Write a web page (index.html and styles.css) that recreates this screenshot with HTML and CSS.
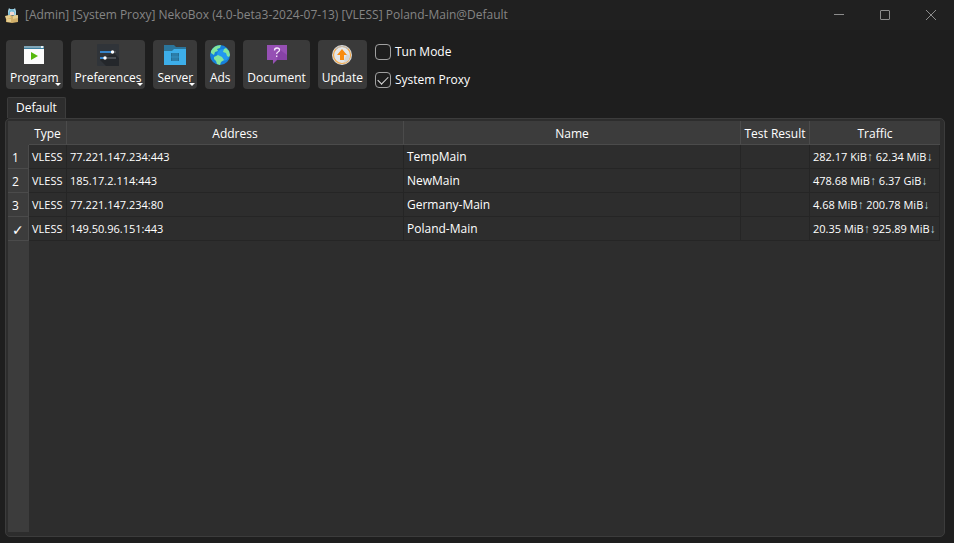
FILE: index.html
```html
<!DOCTYPE html>
<html lang="en">
<head>
<meta charset="utf-8">
<title>NekoBox</title>
<link rel="stylesheet" href="styles.css">
</head>
<body>
<header class="titlebar">
  <svg class="app-icon" viewBox="0 0 14 16" aria-hidden="true">
    <path fill="#a9d6e8" d="M3 10V4l1-3 1 1h4l1-1 1 3v6z"/>
    <path fill="#79b9d2" d="M4 4l2-2h2l2 3v3L9 5 6 4 5 8H3z"/>
    <path fill="#f2d9d2" d="M5 5h4v3H5z"/>
    <path fill="#55778d" d="M6 8h3v1H6z"/>
    <path fill="#d2b06a" d="M1 9l5-1 1 1 5-1 1 2v5l-6 1-6-1z"/>
    <path fill="#e6cd8f" d="M0 9l5-1 1 3-5 1zM8 9l5-1v3l-5 1zM2 12h4v3H2z"/>
  </svg>
  <h1 class="title">[Admin] [System Proxy] NekoBox (4.0-beta3-2024-07-13) [VLESS] Poland-Main@Default</h1>
  <div class="window-controls">
    <button class="window-button" aria-label="Minimize"><svg viewBox="0 0 10 10"><path d="M0 4.5h10"/></svg></button>
    <button class="window-button" aria-label="Maximize"><svg viewBox="0 0 10 10"><rect x=".5" y=".5" width="9" height="9" rx=".5"/></svg></button>
    <button class="window-button" aria-label="Close"><svg viewBox="0 0 10 10"><path d="M0 0l10 10M10 0L0 10"/></svg></button>
  </div>
</header>
<main class="content">
  <div class="toolbar">
    <button class="tool has-menu">
      <svg viewBox="0 0 22 22"><path fill="#fbfbfb" d="M1 2h20v18H1z"/><path fill="#7fa5b7" d="M1 2h20v2H1z"/><path fill="#3c7f9f" d="M1 4h20v1H1z"/><path fill="#e8f3f7" d="M18 2h2v2h-2z"/><path fill="#55b80c" d="M8 8l7 4-7 4z"/></svg>
      <span>Program</span>
    </button>
    <button class="tool has-menu">
      <svg viewBox="0 0 22 22"><rect width="22" height="22" rx="1" fill="#303439"/><path fill="#24272b" d="M3 16L17 9l5 5v8H9z"/><path fill="#4b4f54" d="M3 7h16v2H3zM3 13h16v2H3z"/><path fill="#3684ca" d="M3 7h12v2H3zM3 13h5v2H3z"/><circle cx="15.500" cy="8" r="1.700" fill="#fff"/><circle cx="8" cy="14" r="1.700" fill="#fff"/></svg>
      <span>Preferences</span>
    </button>
    <button class="tool has-menu">
      <svg viewBox="0 0 22 22"><path fill="#2b759b" d="M0 1h10l2 2h10v5H0z"/><path fill="#3daee9" d="M0 7h8l2-2h12v16H0z"/><path fill="#246e96" d="M7 9h8v8H7z"/><path stroke="#3794c6" stroke-width=".8" fill="none" d="M11 9v8M7 13h8M9 9v8M13 9v8"/></svg>
      <span>Server</span>
    </button>
    <button class="tool">
      <svg viewBox="0 0 22 22"><circle cx="11" cy="11" r="10" fill="#1681dc"/><circle cx="14" cy="11" r="6" fill="#2398ef"/><path fill="#82e69c" d="M2 7Q5 1 12 1l-1 3-3 1 1 2-3 1-1 3-3-2zM5 13l4-2 4 2 2 3-3 2-1 3-3-1-1-3-2-2zM17 4l3 3 1 4-1 2-2-1-1-3-3-1 1-3 2-1z"/></svg>
      <span>Ads</span>
    </button>
    <button class="tool">
      <svg viewBox="0 0 22 22"><path fill="#9650b4" d="M1 1h20v15H11l-4 4v-4H1z"/><path fill="#8742a6" d="M13 5l8 6v5H11z"/><path fill="none" stroke="#f5e8fa" stroke-width="1.300" d="M8.500 6.500Q8.500 4 11 4t2.500 2q0 1.300-1.500 2t-1.300 2M10.700 11.500V13"/></svg>
      <span>Document</span>
    </button>
    <button class="tool">
      <svg viewBox="0 0 22 22"><circle cx="11" cy="11" r="10" fill="#d9dadb"/><circle cx="11" cy="11" r="8.500" fill="#e4e6e8" stroke="#f4aa4b" stroke-width="1.200"/><path fill="none" stroke="#b9babc" stroke-width="1.200" d="M5 5a8.500 8.500 0 0 1 12 0"/><path fill="#d3d5d7" d="M13 16l3-6 3 2-1 4-4 3z"/><path fill="#f98b10" d="M11 5l5 6h-3v5H9v-5H6z"/></svg>
      <span>Update</span>
    </button>
    <div class="options">
      <label class="option"><input type="checkbox"><span>Tun Mode</span></label>
      <label class="option"><input type="checkbox" checked><span>System Proxy</span></label>
    </div>
  </div>
  <div class="tabs" role="tablist"><button class="tab" role="tab" aria-selected="true">Default</button></div>
  <section class="panel">
    <div class="sheet">
      <table class="servers">
        <colgroup><col class="col-index"><col class="col-type"><col><col><col class="col-test"><col class="col-traffic"></colgroup>
        <thead><tr><td></td><th>Type</th><th>Address</th><th>Name</th><th>Test Result</th><th>Traffic</th></tr></thead>
        <tbody>
          <tr><th>1</th><td class="compact">VLESS</td><td class="compact">77.221.147.234:443</td><td>TempMain</td><td></td><td class="compact">282.17 KiB<span class="arrow">↑</span> 62.34 MiB<span class="arrow">↓</span></td></tr>
          <tr><th>2</th><td class="compact">VLESS</td><td class="compact">185.17.2.114:443</td><td>NewMain</td><td></td><td class="compact">478.68 MiB<span class="arrow">↑</span> 6.37 GiB<span class="arrow">↓</span></td></tr>
          <tr><th>3</th><td class="compact">VLESS</td><td class="compact">77.221.147.234:80</td><td>Germany-Main</td><td></td><td class="compact">4.68 MiB<span class="arrow">↑</span> 200.78 MiB<span class="arrow">↓</span></td></tr>
          <tr><th class="active">✓</th><td class="compact">VLESS</td><td class="compact">149.50.96.151:443</td><td>Poland-Main</td><td></td><td class="compact">20.35 MiB<span class="arrow">↑</span> 925.89 MiB<span class="arrow">↓</span></td></tr>
        </tbody>
      </table>
    </div>
  </section>
</main>
</body>
</html>
```
FILE: styles.css
```css
* { box-sizing: border-box; }

body {
  margin: 0;
  min-height: 100vh;
  display: flex;
  flex-direction: column;
  background: #1e1e1e;
  color: #fff;
  font: 12px/16px "Open Sans", "Noto Sans", "DejaVu Sans", sans-serif;
}

button {
  margin: 0;
  border: 0;
  color: inherit;
  font: inherit;
}

.titlebar {
  display: flex;
  align-items: center;
  height: 30px;
  padding-left: 5px;
  background: #202020;
  color: #858585;
}

.app-icon { width: 14px; height: 16px; }

.title {
  margin: 0 0 0 6px;
  font-size: 12px;
  font-weight: 400;
  white-space: nowrap;
}

.window-controls { display: flex; margin-left: auto; }

.window-button {
  display: grid;
  place-items: center;
  width: 46px;
  height: 28px;
  padding: 0;
  background: none;
}

.window-button svg {
  width: 10px;
  height: 10px;
  fill: none;
  stroke: #8c8c8c;
  overflow: visible;
}

.content {
  flex: 1;
  display: flex;
  flex-direction: column;
  padding: 10px 9px 6px 5px;
}

.toolbar { display: flex; gap: 8px; padding-left: 1px; }

.tool {
  position: relative;
  display: flex;
  flex-direction: column;
  align-items: center;
  gap: 4px;
  height: 49px;
  padding: 4px 4px 3px;
  border-radius: 4px;
  background: #3a3a3a;
}

.tool svg { width: 22px; height: 22px; }

.has-menu::after {
  content: "";
  position: absolute;
  right: 2px;
  bottom: 3px;
  border: 3px solid transparent;
  border-top-color: #fff;
  border-bottom: 0;
}

.options {
  display: flex;
  flex-direction: column;
  gap: 12px;
  padding-top: 4px;
}

.option { display: flex; align-items: center; gap: 4px; }

.option input {
  appearance: none;
  width: 16px;
  height: 16px;
  margin: 0;
  border: 1px solid #a0a0a0;
  border-radius: 4px;
  display: grid;
  place-items: center;
}

.option input:checked::before {
  content: "";
  width: 9px;
  height: 5px;
  margin-bottom: 3px;
  border: solid #ddd;
  border-width: 0 0 1px 1px;
  rotate: -45deg;
}

.tabs { display: flex; margin-top: 8px; padding-left: 2px; }

.tab {
  height: 21px;
  padding: 0 8px;
  border: 1px solid #3c3c3c;
  border-bottom: 0;
  border-radius: 2px 2px 0 0;
  background: #2d2d2d;
}

.panel {
  flex: 1;
  display: flex;
  padding: 2px 4px 4px 2px;
  border: 1px solid #3c3c3c;
  border-radius: 5px;
  background: #2d2d2d;
}

.sheet {
  flex: 1;
  background: linear-gradient(to right, #3c3c3c 21px, transparent 21px);
}

.servers {
  width: 100%;
  table-layout: fixed;
  border-collapse: separate;
  border-spacing: 0;
}

.col-index { width: 21px; }
.col-type { width: 38px; }
.col-test { width: 69px; }
.col-traffic { width: 130px; }

.servers th, .servers td {
  height: 24px;
  padding: 0 3px;
  border: solid #252525;
  border-width: 0 1px 1px 0;
  font-weight: 400;
  text-align: left;
  white-space: nowrap;
}

.servers thead th, .servers thead td {
  padding: 2px 0 0;
  border-color: #4b4b4b;
  background: #3c3c3c;
  text-align: center;
}

.servers thead td { border: 0; }
.servers thead th:last-child { border-right: 0; }
.servers tbody th { padding: 2px 4px 0; border-color: #4b4b4b; }
.servers tbody .compact { font-size: 11px; }
.servers tbody .active { font-size: 14px; }
.arrow { color: #b5d3de; font: 12px/12px "Liberation Sans", sans-serif; }
```
